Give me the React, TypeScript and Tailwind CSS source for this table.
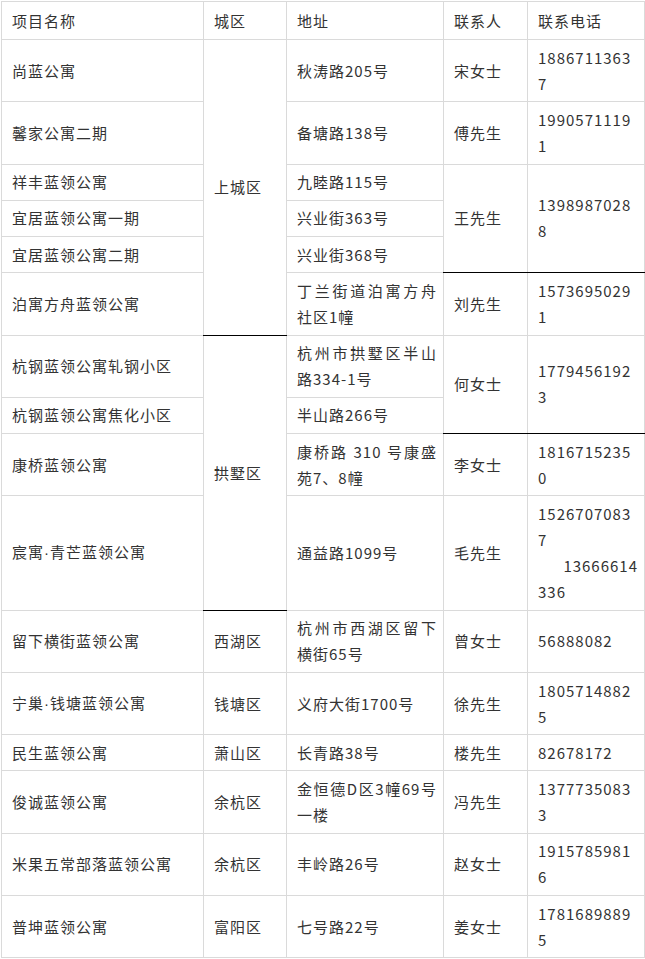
import React from "react";

type Cell = {
  text: React.ReactNode;
  rowSpan?: number;
  darkBottom?: boolean;
};

type Row = Cell[];

// narrow latin middle dot, the CJK font draws it full width
const Dot = () => <span className="font-['Liberation_Sans']">·</span>;

const rows: Row[] = [
  [
    { text: "尚蓝公寓" },
    { text: "上城区", rowSpan: 6, darkBottom: true },
    { text: "秋涛路205号" },
    { text: "宋女士" },
    { text: "18867113637" },
  ],
  [
    { text: "馨家公寓二期" },
    { text: "备塘路138号" },
    { text: "傅先生" },
    { text: "19905711191" },
  ],
  [
    { text: "祥丰蓝领公寓" },
    { text: "九睦路115号" },
    { text: "王先生", rowSpan: 3, darkBottom: true },
    { text: "13989870288", rowSpan: 3, darkBottom: true },
  ],
  [{ text: "宜居蓝领公寓一期" }, { text: "兴业街363号" }],
  [{ text: "宜居蓝领公寓二期" }, { text: "兴业街368号" }],
  [
    { text: "泊寓方舟蓝领公寓" },
    { text: "丁兰街道泊寓方舟社区1幢" },
    { text: "刘先生" },
    { text: "15736950291" },
  ],
  [
    { text: "杭钢蓝领公寓轧钢小区" },
    { text: "拱墅区", rowSpan: 4, darkBottom: true },
    { text: "杭州市拱墅区半山路334-1号" },
    { text: "何女士", rowSpan: 2, darkBottom: true },
    { text: "17794561923", rowSpan: 2, darkBottom: true },
  ],
  [{ text: "杭钢蓝领公寓焦化小区" }, { text: "半山路266号" }],
  [
    { text: "康桥蓝领公寓" },
    { text: "康桥路 310 号康盛苑7、8幢" },
    { text: "李女士" },
    { text: "18167152350" },
  ],
  [
    {
      text: (
        <>
          宸寓<Dot />青芒蓝领公寓
        </>
      ),
    },
    { text: "通益路1099号" },
    { text: "毛先生" },
    {
      text: (
        <>
          15267070837
          <br />
          {"\u3000\u00a013666614336"}
        </>
      ),
    },
  ],
  [
    { text: "留下横街蓝领公寓" },
    { text: "西湖区" },
    { text: "杭州市西湖区留下横街65号" },
    { text: "曾女士" },
    { text: "56888082" },
  ],
  [
    {
      text: (
        <>
          宁巢<Dot />钱塘蓝领公寓
        </>
      ),
    },
    { text: "钱塘区" },
    { text: "义府大街1700号" },
    { text: "徐先生" },
    { text: "18057148825" },
  ],
  [
    { text: "民生蓝领公寓" },
    { text: "萧山区" },
    { text: "长青路38号" },
    { text: "楼先生" },
    { text: "82678172" },
  ],
  [
    { text: "俊诚蓝领公寓" },
    { text: "余杭区" },
    { text: "金恒德D区3幢69号一楼" },
    { text: "冯先生" },
    { text: "13777350833" },
  ],
  [
    { text: "米果五常部落蓝领公寓" },
    { text: "余杭区" },
    { text: "丰岭路26号" },
    { text: "赵女士" },
    { text: "19157859816" },
  ],
  [
    { text: "普坤蓝领公寓" },
    { text: "富阳区" },
    { text: "七号路22号" },
    { text: "姜女士" },
    { text: "17816898895" },
  ],
];

const headers = ["项目名称", "城区", "地址", "联系人", "联系电话"];

const cellBase =
  "border border-[#dadada] pl-[10px] pr-[6px] align-middle text-justify break-all";

export default function App() {
  return (
    <div
      className="min-h-screen bg-white pl-px pt-px text-[15px] leading-[26.1px] tracking-[1px] text-[#333]"
      style={{ fontFamily: '"Noto Sans CJK SC", "Noto Sans", sans-serif' }}
    >
      <table className="w-[643px] table-fixed border-collapse">
        <colgroup>
          <col className="w-[202px]" />
          <col className="w-[83px]" />
          <col className="w-[157px]" />
          <col className="w-[84px]" />
          <col className="w-[117px]" />
        </colgroup>
        <thead>
          <tr>
            {headers.map((h) => (
              <th key={h} className={`${cellBase} py-[5.5px] text-left font-normal`}>
                {h}
              </th>
            ))}
          </tr>
        </thead>
        <tbody>
          {rows.map((r, i) => (
            <tr key={i}>
              {r.map((c, j) => (
                <td
                  key={j}
                  rowSpan={c.rowSpan}
                  className={`${cellBase} py-[4.55px] ${c.darkBottom ? "border-b-black" : ""}`}
                >
                  {c.text}
                </td>
              ))}
            </tr>
          ))}
        </tbody>
      </table>
    </div>
  );
}
